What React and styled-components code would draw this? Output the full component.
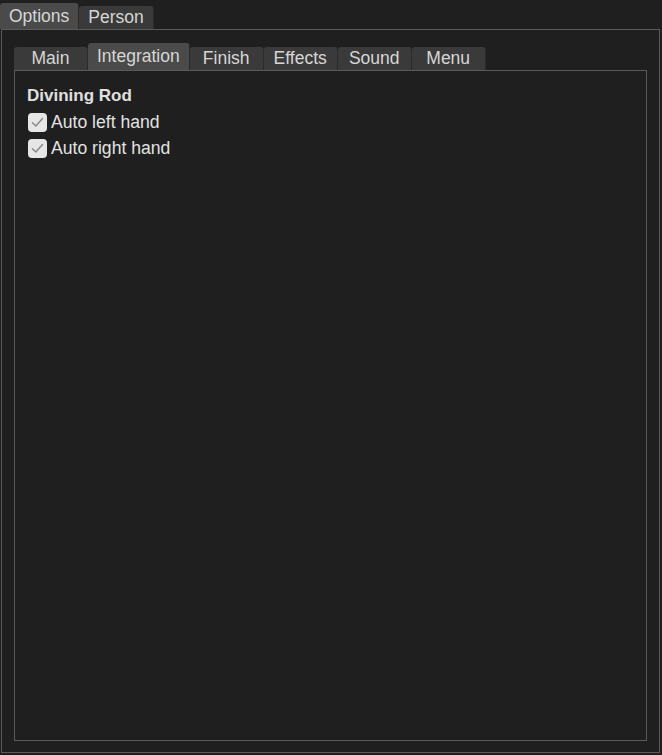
import React, { useState } from "react";
import styled, { createGlobalStyle } from "styled-components";

const GlobalStyle = createGlobalStyle`
  html, body {
    margin: 0;
    padding: 0;
    background: #1f1f1f;
  }
  body {
    font-family: "Liberation Sans", Arial, sans-serif;
    color: #dcdcdc;
  }
`;

const Page = styled.div`
  width: 662px;
  height: 755px;
  display: flex;
  flex-direction: column;
  box-sizing: border-box;
  padding-bottom: 2px;
`;

const TabRow = styled.div`
  display: flex;
  align-items: flex-end;
  height: ${(p) => p.$height}px;
  flex-shrink: 0;
`;

const Tab = styled.div`
  box-sizing: border-box;
  min-width: 74px;
  height: ${(p) => (p.$active ? p.$tall : p.$short)}px;
  padding: 0 9px;
  display: flex;
  align-items: center;
  justify-content: center;
  font-size: 17.5px;
  color: #d6d6d6;
  background: ${(p) => (p.$active ? "#4a4a4a" : "#3a3a3a")};
  border-radius: 3px 3px 0 0;
  border-right: 1px solid #2b2b2b;
  cursor: default;
  white-space: nowrap;
`;

const OuterPanel = styled.div`
  flex: 1;
  margin: 0 2px 0 1px;
  border: 1px solid #5a5a5a;
  display: flex;
  flex-direction: column;
  padding: 0 12px 11px 12px;
`;

const InnerPanel = styled.div`
  flex: 1;
  border: 1px solid #5a5a5a;
  padding: 15px 12px;
  display: flex;
  flex-direction: column;
`;

const SectionTitle = styled.div`
  font-weight: bold;
  font-size: 17px;
  color: #e0e0e0;
  line-height: 20px;
  margin-bottom: 3px;
`;

const CheckRow = styled.label`
  display: flex;
  align-items: center;
  gap: 4px;
  height: 26px;
  font-size: 17.6px;
  color: #e2e2e2;
`;

const Box = styled.span`
  width: 19px;
  height: 19px;
  border-radius: 4px;
  background: #e6e6e6;
  display: flex;
  align-items: center;
  justify-content: center;
  flex-shrink: 0;
  margin-left: 1px;
`;

function CheckBox({ label }) {
  return (
    <CheckRow>
      <Box>
        <svg width="15" height="15" viewBox="0 0 15 15">
          <path d="M2.5 7.8 L5.8 11 L12.5 3.5" fill="none" stroke="#8c8c8c" strokeWidth="1.6" strokeLinecap="round" strokeLinejoin="round" />
        </svg>
      </Box>
      {label}
    </CheckRow>
  );
}

const outerTabs = ["Options", "Person"];
const innerTabs = ["Main", "Integration", "Finish", "Effects", "Sound", "Menu"];

export default function App() {
  const [outer, setOuter] = useState(0);
  const [inner, setInner] = useState(1);

  return (
    <Page>
      <GlobalStyle />
      <TabRow $height={29}>
        {outerTabs.map((t, i) => (
          <Tab key={t} $active={i === outer} $tall={26} $short={23} onClick={() => setOuter(i)}>
            {t}
          </Tab>
        ))}
      </TabRow>
      <OuterPanel>
        <TabRow $height={40}>
          {innerTabs.map((t, i) => (
            <Tab key={t} $active={i === inner} $tall={27} $short={23} onClick={() => setInner(i)}>
              {t}
            </Tab>
          ))}
        </TabRow>
        <InnerPanel>
          <SectionTitle>Divining Rod</SectionTitle>
          <CheckBox label="Auto left hand" />
          <CheckBox label="Auto right hand" />
        </InnerPanel>
      </OuterPanel>
    </Page>
  );
}
